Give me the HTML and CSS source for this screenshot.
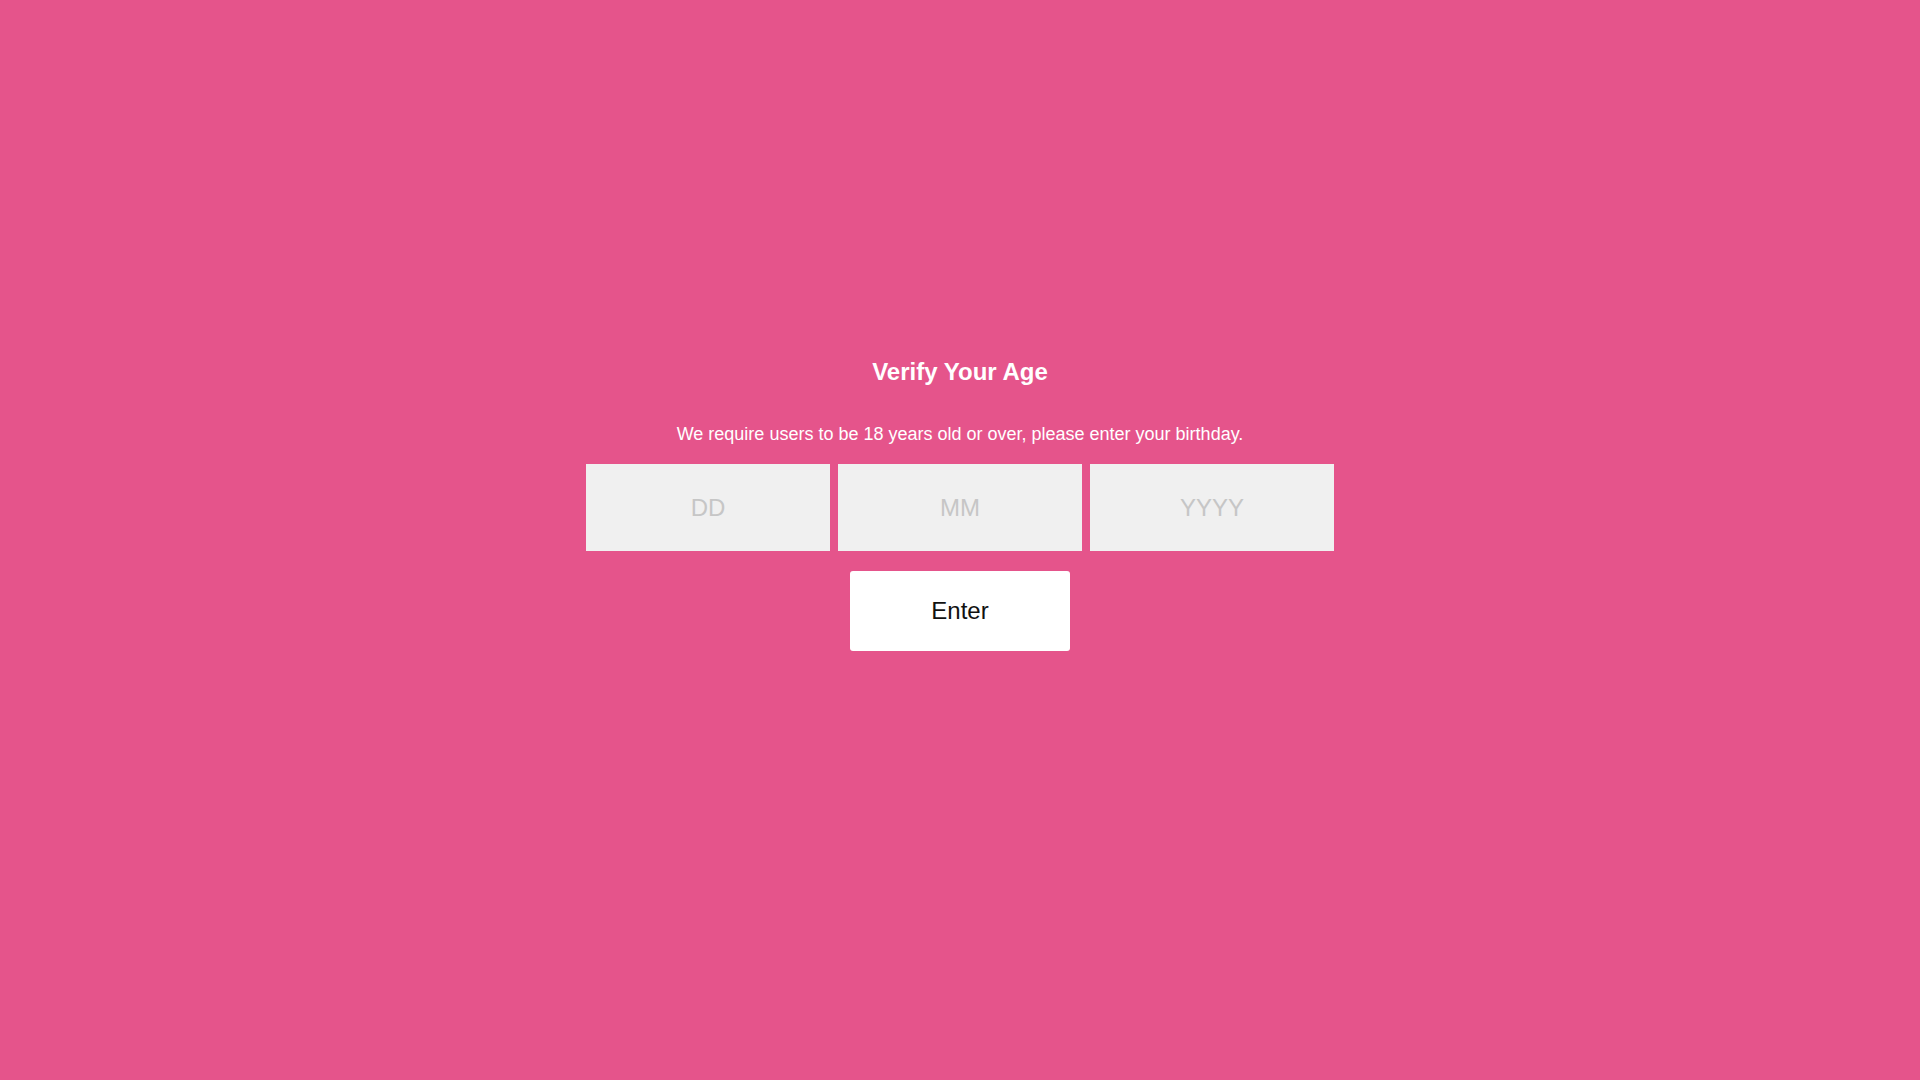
FILE: index.html
```html
<!DOCTYPE html>
<html lang="en">
<head>
<meta charset="utf-8">
<title>Verify Your Age</title>
<link rel="stylesheet" href="styles.css">
</head>
<body>
<main class="gate">
  <h1 class="gate-title">Verify Your Age</h1>
  <p class="gate-text">We require users to be 18 years old or over, please enter your birthday.</p>
  <form class="gate-form">
    <div class="gate-fields">
      <input class="gate-input" type="text" placeholder="DD">
      <input class="gate-input" type="text" placeholder="MM">
      <input class="gate-input" type="text" placeholder="YYYY">
    </div>
    <button class="gate-button" type="button">Enter</button>
  </form>
</main>
</body>
</html>
```

FILE: styles.css
```css
html, body {
  margin: 0;
  padding: 0;
  height: 100%;
}
body {
  background: #e5548b;
  font-family: "Liberation Sans", Arial, sans-serif;
}
.gate {
  display: flex;
  flex-direction: column;
  align-items: center;
  padding-top: 358px;
}
.gate-title {
  margin: 0;
  font-size: 24px;
  line-height: 28px;
  font-weight: bold;
  color: #ffffff;
}
.gate-text {
  margin: 37px 0 0;
  font-size: 18px;
  line-height: 22px;
  color: #ffffff;
}
.gate-form {
  display: flex;
  flex-direction: column;
  align-items: center;
  margin-top: 19px;
}
.gate-fields {
  display: flex;
  gap: 8px;
}
.gate-input {
  box-sizing: border-box;
  width: 244px;
  height: 87px;
  border: none;
  border-radius: 0;
  margin: 0;
  padding: 0;
  background: #f0f0f0;
  font-family: "Liberation Sans", Arial, sans-serif;
  font-size: 24px;
  text-align: center;
  color: #333;
  outline: none;
}
.gate-input::placeholder {
  color: #c6c6c6;
  opacity: 1;
}
.gate-button {
  box-sizing: border-box;
  margin-top: 20px;
  width: 220px;
  height: 80px;
  border: none;
  border-radius: 3px;
  background: #ffffff;
  font-family: "Liberation Sans", Arial, sans-serif;
  font-size: 24px;
  color: #111111;
  cursor: pointer;
}
```
